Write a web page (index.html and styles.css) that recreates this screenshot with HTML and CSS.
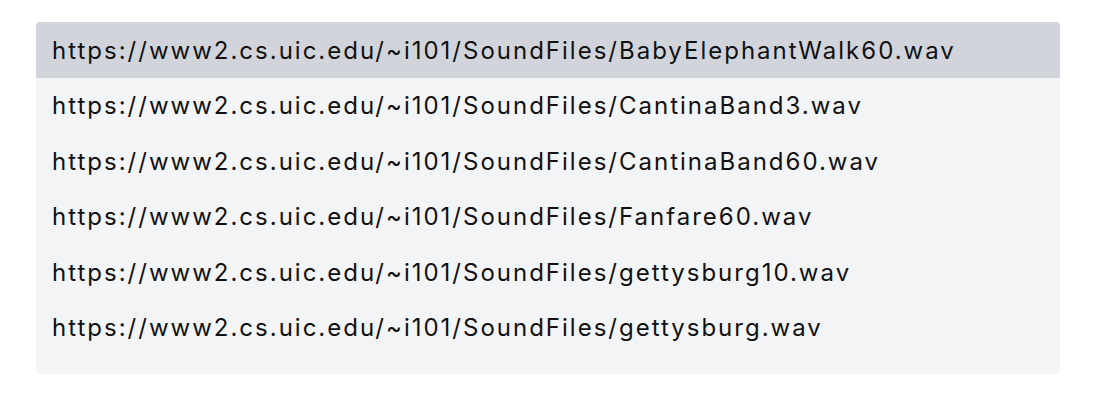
FILE: index.html
```html
<!DOCTYPE html>
<html>
<head>
<meta charset="utf-8">
<link rel="stylesheet" href="styles.css">
</head>
<body>
<div class="page">
  <ul class="list">
    <li class="item active">https://www2.cs.uic.edu/~i101/SoundFiles/BabyElephantWalk60.wav</li>
    <li class="item">https://www2.cs.uic.edu/~i101/SoundFiles/CantinaBand3.wav</li>
    <li class="item">https://www2.cs.uic.edu/~i101/SoundFiles/CantinaBand60.wav</li>
    <li class="item">https://www2.cs.uic.edu/~i101/SoundFiles/Fanfare60.wav</li>
    <li class="item">https://www2.cs.uic.edu/~i101/SoundFiles/gettysburg10.wav</li>
    <li class="item">https://www2.cs.uic.edu/~i101/SoundFiles/gettysburg.wav</li>
  </ul>
</div>
</body>
</html>
```
FILE: styles.css
```css
* { box-sizing: border-box; }
body {
  margin: 0;
  background: #ffffff;
  font-family: Inter, "Noto Sans", sans-serif;
}
.page {
  padding: 22px 48px 0 36px;
}
.list {
  list-style: none;
  margin: 0;
  padding: 0 0 18px 0;
  width: 1024px;
  background: #f3f4f6;
  border-radius: 4px;
  overflow: hidden;
}
.item {
  padding: 0 16px;
  height: 55.5px;
  display: flex;
  align-items: center;
  font-size: 24px;
  letter-spacing: 2px;
  color: #111111;
}
.item.active {
  background: #d1d5db;
  height: 56px;
}
```
